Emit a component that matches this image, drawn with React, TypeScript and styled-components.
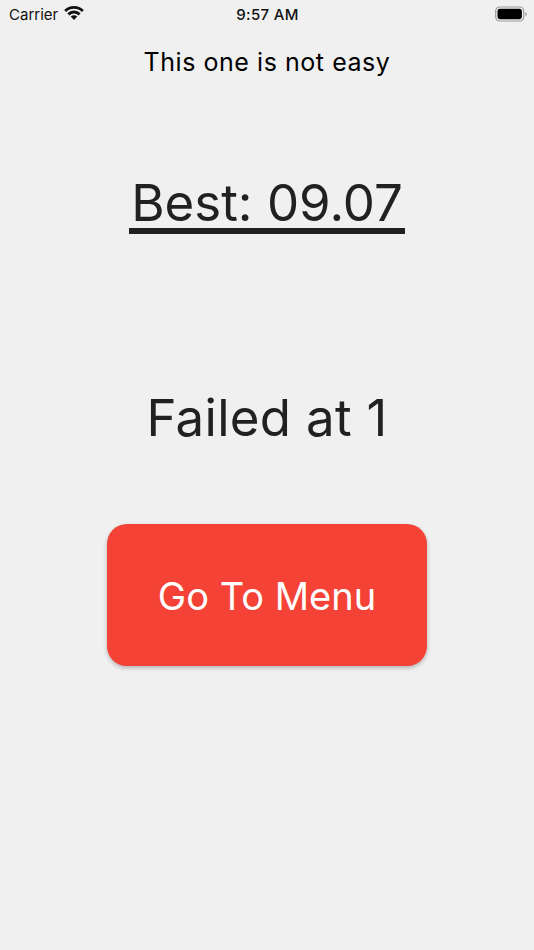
import React from "react";
import styled, { createGlobalStyle } from "styled-components";

const Global = createGlobalStyle`
  html, body { margin: 0; padding: 0; }
  body { background: #f0f0f0; font-family: Inter, "Liberation Sans", sans-serif; }
`;

const Screen = styled.div`
  width: 534px;
  height: 950px;
  background: #f0f0f0;
  display: flex;
  flex-direction: column;
  align-items: center;
  overflow: hidden;
`;

const StatusBar = styled.div`
  align-self: stretch;
  height: 28px;
  display: grid;
  grid-template-columns: 1fr auto 1fr;
  align-items: center;
  padding: 0 7px 0 9px;
  color: #111;
`;

const StatusLeft = styled.div`
  display: flex;
  align-items: center;
  gap: 6px;
  font-size: 15px;
`;

const Clock = styled.div`
  font-size: 15px;
  font-weight: 500;
  letter-spacing: 0.3px;
  margin-right: 1px;
`;

const StatusRight = styled.div`
  display: flex;
  justify-content: flex-end;
`;

const WifiIcon = styled.svg`
  width: 20px;
  height: 15px;
  margin-top: -3px;
`;

const BatteryIcon = styled.svg`
  width: 32px;
  height: 16px;
`;

const Subtitle = styled.div`
  margin-top: 18px;
  font-size: 25px;
  line-height: 32px;
  color: #000;
  letter-spacing: 0.55px;
`;

const Best = styled.div`
  margin-top: 100px;
  padding: 0 2px;
  font-size: 51px;
  line-height: 50px;
  color: #212121;
  border-bottom: 6px solid #212121;
`;

const Failed = styled.div`
  margin-top: 154px;
  font-size: 51px;
  line-height: 60px;
  color: #212121;
  letter-spacing: 0.3px;
`;

const MenuButton = styled.button`
  margin-top: 76px;
  width: 320px;
  height: 142px;
  padding: 2px 0 0;
  border: none;
  border-radius: 20px;
  background: #f44336;
  color: #fff;
  font-family: inherit;
  font-size: 38px;
  box-shadow: 0 2px 4px rgba(0, 0, 0, 0.25);
`;

const Wifi = () => (
  <WifiIcon viewBox="0 0 20 15">
    <path d="M0.2 4.9A14 14 0 0 1 19.8 4.9L17.9 7A11.2 11.2 0 0 0 2.1 7Z" fill="#111" />
    <path d="M3.4 8.3A9.4 9.4 0 0 1 16.6 8.3L14.6 10.4A6.5 6.5 0 0 0 5.4 10.4Z" fill="#111" />
    <path d="M6.7 11.6A4.7 4.7 0 0 1 13.3 11.6L10 15Z" fill="#111" />
  </WifiIcon>
);

const Battery = () => (
  <BatteryIcon viewBox="0 0 32 16">
    <rect x="0.7" y="1" width="28" height="14" rx="4" fill="none" stroke="#999" strokeWidth="1.2" />
    <rect x="2.5" y="2.8" width="24.4" height="10.4" rx="2.4" fill="#000" />
    <path d="M30.4 6v4c.8-.3 1.4-1.1 1.4-2s-.6-1.7-1.4-2Z" fill="#999" />
  </BatteryIcon>
);

export default function App() {
  return (
    <Screen>
      <Global />
      <StatusBar>
        <StatusLeft>
          Carrier
          <Wifi />
        </StatusLeft>
        <Clock>9:57 AM</Clock>
        <StatusRight>
          <Battery />
        </StatusRight>
      </StatusBar>
      <Subtitle>This one is not easy</Subtitle>
      <Best>Best: 09.07</Best>
      <Failed>Failed at 1</Failed>
      <MenuButton>Go To Menu</MenuButton>
    </Screen>
  );
}
